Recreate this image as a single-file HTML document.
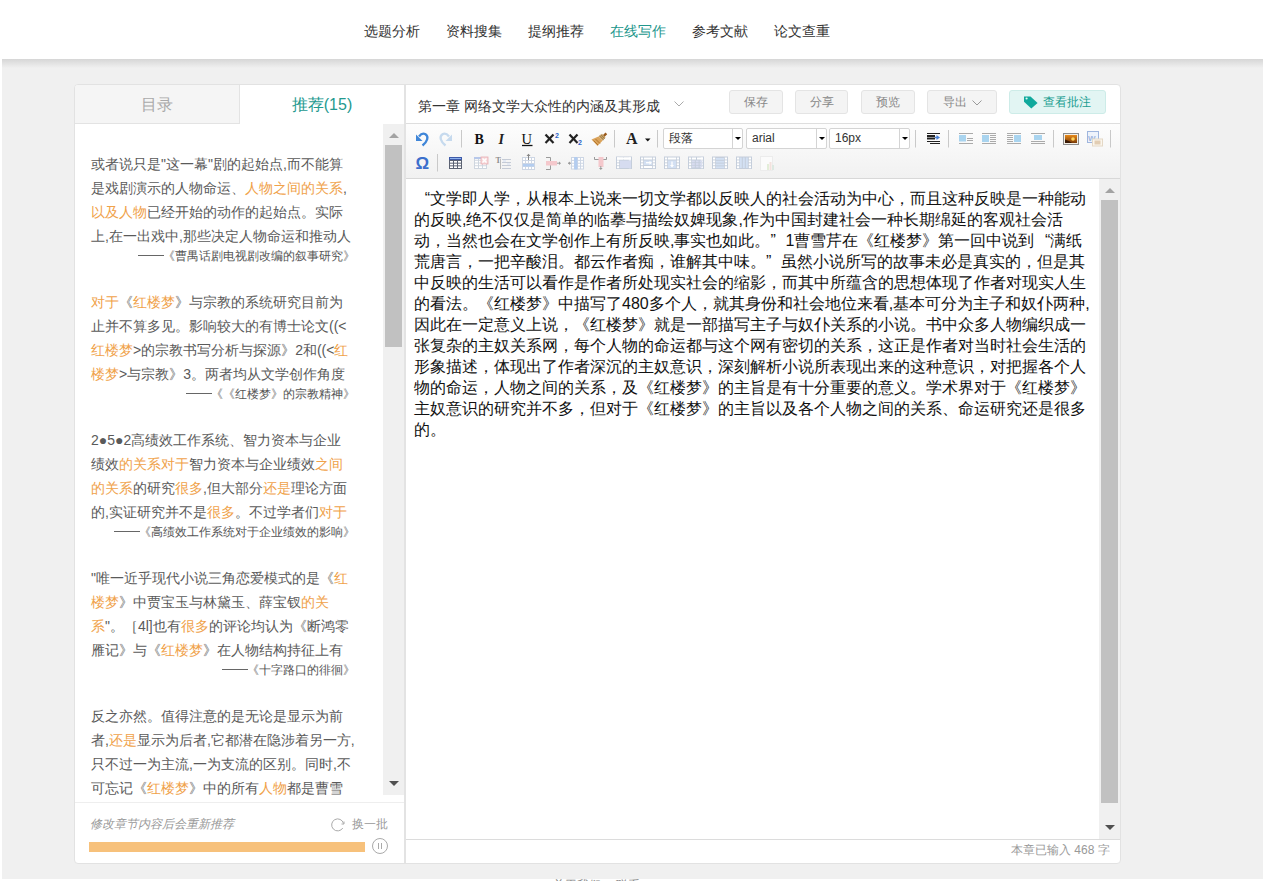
<!DOCTYPE html>
<html><head><meta charset="utf-8">
<style>
*{box-sizing:border-box;margin:0;padding:0}
html,body{width:1265px;height:881px;overflow:hidden;background:#fff;font-family:"Liberation Sans",sans-serif;}
.abs{position:absolute}
#hdr{position:absolute;left:0;top:0;width:1265px;height:59px;background:#fff}
#gbg{position:absolute;left:2px;top:59px;width:1261px;height:820px;background:#f0f0f0}
#shadow{position:absolute;left:2px;top:59px;width:1261px;height:9px;background:linear-gradient(#d6d6d6,#f0f0f0)}
.nav{position:absolute;top:21px;font-size:14px;line-height:20px;color:#333;white-space:nowrap}
.nav.on{color:#22968c}
#frame{position:absolute;left:74px;top:84px;width:1047px;height:780px;border:1px solid #e2e2e2;border-radius:4px;background:#fff}
#left{position:absolute;left:75px;top:85px;width:329px;height:777px;background:#fff}
#vline{position:absolute;left:404px;top:85px;width:2px;height:778px;background:#e3e3e3}
.tab{position:absolute;top:85px;height:39px;font-size:16px;line-height:39px;text-align:center}
#tab1{left:75px;width:165px;background:#f5f5f5;color:#aaa;border-right:1px solid #e3e3e3;border-bottom:1px solid #e3e3e3;border-top-left-radius:3px}
#tab2{left:240px;width:164px;color:#24998f}
.blk{position:absolute;left:91px;width:270px;font-size:14px;line-height:24px;color:#5a5a5a;white-space:nowrap}
.o{color:#f0a24a}
.cite{font-size:12px;line-height:18px;text-align:right;color:#555;margin-top:-1px;padding-right:6px}
#lsb{position:absolute;left:383px;top:124px;width:21px;height:671px;background:#f0f0f0}
#lthumb{position:absolute;left:385px;top:145px;width:17px;height:202px;background:#c1c1c1}
#lfoot{position:absolute;left:75px;top:802px;width:329px;height:1px;background:#eee}
.tri-up{position:absolute;width:0;height:0;border-left:5px solid transparent;border-right:5px solid transparent;border-bottom:5px solid #a3a3a3}
.tri-dn{position:absolute;width:0;height:0;border-left:5px solid transparent;border-right:5px solid transparent;border-top:5px solid #505050}
#hint{position:absolute;left:90px;top:816px;font-size:12px;line-height:16px;color:#999;font-style:italic;white-space:nowrap}
#swap{position:absolute;left:352px;top:816px;font-size:12px;line-height:16px;color:#999;white-space:nowrap}
#bar{position:absolute;left:89px;top:842px;width:276px;height:10px;background:#f7c17b}
#pause{position:absolute;left:372px;top:838px;width:16px;height:16px;border:1px solid #aaa;border-radius:50%}
/* right */
#title{position:absolute;left:418px;top:96px;font-size:14px;line-height:20px;color:#333;white-space:nowrap}
.btn{position:absolute;top:90px;height:24px;border:1px solid #e4e4e4;border-radius:3px;background:#f4f4f4;color:#888;font-size:12px;line-height:22px;text-align:center;white-space:nowrap}
#btn5{background:#e2f5f3;border-color:#cdece8;color:#1a9d91}
#tbar{position:absolute;left:406px;top:123px;width:714px;height:56px;background:linear-gradient(#fdfdfd,#f1f1f1);border-top:1px solid #dedede;border-bottom:1px solid #d8d8d8}
.sep{position:absolute;width:1px;height:17px;background:#d6d6d6}
.sel{position:absolute;top:128px;height:21px;border:1px solid #d4d4d4;border-radius:2px;background:#fff;font-size:12px;line-height:19px;color:#333;padding-left:5px;white-space:nowrap}
.sel i{position:absolute;right:0;top:0;width:10px;height:19px;border-left:1px solid #d4d4d4}
.sel i:after{content:"";position:absolute;left:2px;top:8px;border-left:3px solid transparent;border-right:3px solid transparent;border-top:3px solid #000}
#editor{position:absolute;left:414px;top:188px;font-size:16px;line-height:21px;color:#111;white-space:nowrap}
#rsb{position:absolute;left:1099px;top:179px;width:21px;height:660px;background:#f0f0f0}
#rthumb{position:absolute;left:1101px;top:200px;width:17px;height:603px;background:#c1c1c1}
#status{position:absolute;left:406px;top:839px;width:714px;height:1px;background:#dcdcdc}
#cnt{position:absolute;left:1011px;top:842px;font-size:12px;line-height:16px;color:#999;white-space:nowrap}
.dash{display:inline-block;width:26px;height:1px;background:#666;vertical-align:middle;margin-right:-1px;position:relative;top:-1px}
.q{display:inline-block;width:16px;text-align:right}
</style></head><body>
<div id="gbg"></div><div id="hdr"></div><div id="shadow"></div>
<div class="nav" style="left:364px">选题分析</div>
<div class="nav" style="left:446px">资料搜集</div>
<div class="nav" style="left:528px">提纲推荐</div>
<div class="nav on" style="left:610px">在线写作</div>
<div class="nav" style="left:692px">参考文献</div>
<div class="nav" style="left:774px">论文查重</div>

<div id="frame"></div>
<div id="vline"></div>
<div id="tab1" class="tab">目录</div>
<div id="tab2" class="tab">推荐(15)</div>

<div class="blk" style="top:152px">或者说只是"这一幕"剧的起始点,而不能算<br>是戏剧演示的人物命运、<span class="o">人物之间的关系</span>,<br><span class="o">以及人物</span>已经开始的动作的起始点。实际<br>上,在一出戏中,那些决定人物命运和推动人<div class="cite"><i class="dash"></i>《曹禺话剧电视剧改编的叙事研究》</div></div>
<div class="blk" style="top:290px"><span class="o">对于</span>《<span class="o">红楼梦</span>》与宗教的系统研究目前为<br>止并不算多见。影响较大的有博士论文((&lt;<br><span class="o">红楼梦</span>&gt;的宗教书写分析与探源》2和((&lt;<span class="o">红</span><br><span class="o">楼梦</span>&gt;与宗教》3。两者均从文学创作角度<div class="cite"><i class="dash"></i>《《红楼梦》的宗教精神》</div></div>
<div class="blk" style="top:428px">2●5●2高绩效工作系统、智力资本与企业<br>绩效<span class="o">的关系对于</span>智力资本与企业绩效<span class="o">之间</span><br><span class="o">的关系</span>的研究<span class="o">很多</span>,但大部分<span class="o">还是</span>理论方面<br>的,实证研究并不是<span class="o">很多</span>。不过学者们<span class="o">对于</span><div class="cite"><i class="dash"></i>《高绩效工作系统对于企业绩效的影响》</div></div>
<div class="blk" style="top:566px">"唯一近乎现代小说三角恋爱模式的是《<span class="o">红</span><br><span class="o">楼梦</span>》中贾宝玉与林黛玉、薛宝钗<span class="o">的关</span><br><span class="o">系</span>"。［4l]也有<span class="o">很多</span>的评论均认为《断鸿零<br>雁记》与《<span class="o">红楼梦</span>》在人物结构持征上有<div class="cite"><i class="dash"></i>《十字路口的徘徊》</div></div>
<div class="abs" style="left:75px;top:700px;width:308px;height:95px;overflow:hidden">
<div class="blk" style="left:16px;top:4px">反之亦然。值得注意的是无论是显示为前<br>者,<span class="o">还是</span>显示为后者,它都潜在隐涉着另一方,<br>只不过一为主流,一为支流的区别。同时,不<br>可忘记《<span class="o">红楼梦</span>》中的所有<span class="o">人物</span>都是曹雪</div>
</div>

<div id="lsb"></div><div id="lthumb"></div>
<div class="tri-up" style="left:389px;top:133px"></div>
<div class="tri-dn" style="left:389px;top:781px"></div>
<div id="lfoot"></div>
<div id="hint">修改章节内容后会重新推荐</div>
<svg class="abs" style="left:331px;top:817px" width="15" height="15" viewBox="0 0 15 15"><path d="M12.5 6.5 A6 6 0 1 0 11.8 11" fill="none" stroke="#aaa" stroke-width="1"/><path d="M10.5 7 L13 7 L13 4.5" fill="none" stroke="#aaa" stroke-width="1"/></svg>
<div id="swap">换一批</div>
<div id="bar"></div>
<div id="pause"><i style="position:absolute;left:5px;top:4px;width:1px;height:6px;background:#aaa"></i><i style="position:absolute;left:8px;top:4px;width:1px;height:6px;background:#aaa"></i></div>

<div id="title">第一章 网络文学大众性的内涵及其形成</div>
<svg class="abs" style="left:674px;top:101px" width="10" height="6" viewBox="0 0 10 6"><path d="M0.5 0.5 L5 5 L9.5 0.5" fill="none" stroke="#aaa" stroke-width="1"/></svg>
<div class="btn" style="left:729px;width:54px">保存</div>
<div class="btn" style="left:795px;width:53px">分享</div>
<div class="btn" style="left:861px;width:54px">预览</div>
<div class="btn" style="left:927px;width:70px;text-align:left;padding-left:15px">导出 <svg style="position:absolute;left:44px;top:9px" width="10" height="6" viewBox="0 0 10 6"><path d="M0.5 0.5 L5 5 L9.5 0.5" fill="none" stroke="#999" stroke-width="1"/></svg></div>
<div class="btn" id="btn5" style="left:1009px;width:97px;text-align:left;padding-left:33px">查看批注<svg style="position:absolute;left:12px;top:0px" width="20" height="20" viewBox="1022 91 20 20"><path d="M1024 96.5 L1030.5 96.5 L1037.6 103 L1031.3 108.6 L1024 101.8 Z" fill="#10a99c"/><circle cx="1026.6" cy="98.5" r="1.1" fill="#dff7f4"/></svg></div>

<div id="tbar"></div>
<div class="sep" style="left:461px;top:130px"></div>
<div class="sep" style="left:614px;top:130px"></div>
<div class="sep" style="left:657px;top:130px"></div>
<div class="sep" style="left:915px;top:130px"></div>
<div class="sep" style="left:948px;top:130px"></div>
<div class="sep" style="left:1053px;top:130px"></div>
<div class="sep" style="left:1110px;top:130px"></div>
<div class="sep" style="left:437px;top:154px"></div>
<!--TB--><svg style="position:absolute;left:0;top:0" width="1265" height="181" viewBox="0 0 1265 181"><line x1="461.5" y1="130" x2="461.5" y2="147.5" stroke="#c9c9c9" stroke-width="1"/><line x1="614.5" y1="130" x2="614.5" y2="147.5" stroke="#c9c9c9" stroke-width="1"/><line x1="657.5" y1="130" x2="657.5" y2="147.5" stroke="#c9c9c9" stroke-width="1"/><line x1="915.5" y1="130" x2="915.5" y2="147.5" stroke="#c9c9c9" stroke-width="1"/><line x1="948.5" y1="130" x2="948.5" y2="147.5" stroke="#c9c9c9" stroke-width="1"/><line x1="1053.5" y1="130" x2="1053.5" y2="147.5" stroke="#c9c9c9" stroke-width="1"/><line x1="1110.5" y1="130" x2="1110.5" y2="147.5" stroke="#c9c9c9" stroke-width="1"/><line x1="437.5" y1="154" x2="437.5" y2="171.5" stroke="#c9c9c9" stroke-width="1"/><path d="M422.5 145.5 C427.5 141.5 429 136.5 425.5 134.2 C423.5 133 421 133.8 419 136.5" fill="none" stroke="#3f86d8" stroke-width="2.3"/><polygon points="416,134.5 416,141 422.5,141" fill="#3f86d8"/><g transform="translate(868,0) scale(-1,1)"><path d="M422.5 145.5 C427.5 141.5 429 136.5 425.5 134.2 C423.5 133 421 133.8 419 136.5" fill="none" stroke="#c6daee" stroke-width="2.3"/><polygon points="416,134.5 416,141 422.5,141" fill="#c6daee"/></g><text x="474.5" y="144" font-family="Liberation Serif" font-weight="bold" font-size="14" fill="#111">B</text><text x="498.5" y="144" font-family="Liberation Serif" font-weight="bold" font-style="italic" font-size="14" fill="#222">I</text><text x="521.5" y="144" font-family="Liberation Serif" font-size="14.5" fill="#111">U</text><line x1="522" y1="145.5" x2="532.5" y2="145.5" stroke="#111" stroke-width="1.3"/><line x1="545.5" y1="134.5" x2="553.5" y2="143" stroke="#222" stroke-width="2.2"/><line x1="553.5" y1="134.5" x2="545.5" y2="143" stroke="#222" stroke-width="2.2"/><text x="555" y="137.5" font-family="Liberation Sans" font-weight="bold" font-size="7" fill="#2c63c8">2</text><line x1="569.5" y1="134.5" x2="577.5" y2="143" stroke="#222" stroke-width="2.2"/><line x1="577.5" y1="134.5" x2="569.5" y2="143" stroke="#222" stroke-width="2.2"/><text x="578" y="144.5" font-family="Liberation Sans" font-weight="bold" font-size="7" fill="#2c63c8">2</text><polygon points="602.5,135.5 605.5,132.5 607.2,134.2 604.2,137.2" fill="#9a5a1c"/><polygon points="598.5,136.5 602,133.8 605.5,137.5 602.5,140.8" fill="#c8a46a"/><line x1="599.5" y1="135.8" x2="603.8" y2="140" stroke="#8c6a3a" stroke-width="0.7"/><line x1="601" y1="134.8" x2="604.8" y2="138.8" stroke="#8c6a3a" stroke-width="0.7"/><polygon points="591.5,139.5 598.5,136.5 602.5,140.8 597.5,146" fill="#dba45c"/><line x1="593.5" y1="140.5" x2="598" y2="145" stroke="#a8691f" stroke-width="0.8"/><line x1="595.5" y1="139" x2="600" y2="143.5" stroke="#a8691f" stroke-width="0.8"/><text x="626" y="143.5" font-family="Liberation Serif" font-weight="bold" font-size="16" fill="#222">A</text><polygon points="645,138.5 650.5,138.5 647.75,141.5" fill="#111"/><line x1="927" y1="133.5" x2="940" y2="133.5" stroke="#222" stroke-width="1"/><line x1="927" y1="136" x2="935" y2="136" stroke="#222" stroke-width="2"/><line x1="927" y1="138.5" x2="935" y2="138.5" stroke="#222" stroke-width="2"/><line x1="927" y1="141.5" x2="940" y2="141.5" stroke="#222" stroke-width="1"/><line x1="930" y1="143.5" x2="940" y2="143.5" stroke="#222" stroke-width="1"/><polygon points="936.5,135 940,137.5 936.5,140" fill="#4c82d6"/><line x1="935" y1="137.5" x2="937" y2="137.5" stroke="#4c82d6" stroke-width="1.5"/><line x1="959" y1="133.5" x2="973" y2="133.5" stroke="#aaa" stroke-width="1"/><rect x="959" y="135" width="7" height="6.5" fill="#a9d4ef"/><line x1="967" y1="138.5" x2="973" y2="138.5" stroke="#aaa" stroke-width="1"/><line x1="967" y1="140.5" x2="973" y2="140.5" stroke="#aaa" stroke-width="1"/><line x1="959" y1="143.5" x2="973" y2="143.5" stroke="#aaa" stroke-width="1"/><line x1="982" y1="133.5" x2="996" y2="133.5" stroke="#aaa" stroke-width="1"/><rect x="982" y="135" width="7" height="7" fill="#a9d4ef"/><line x1="990" y1="135.5" x2="996" y2="135.5" stroke="#aaa" stroke-width="1"/><line x1="990" y1="137.5" x2="996" y2="137.5" stroke="#aaa" stroke-width="1"/><line x1="990" y1="139.5" x2="996" y2="139.5" stroke="#aaa" stroke-width="1"/><line x1="990" y1="141.5" x2="996" y2="141.5" stroke="#aaa" stroke-width="1"/><line x1="982" y1="143.5" x2="996" y2="143.5" stroke="#aaa" stroke-width="1"/><line x1="1007" y1="133.5" x2="1021" y2="133.5" stroke="#aaa" stroke-width="1"/><rect x="1014" y="135" width="7" height="7" fill="#a9d4ef"/><line x1="1007" y1="135.5" x2="1013" y2="135.5" stroke="#aaa" stroke-width="1"/><line x1="1007" y1="137.5" x2="1013" y2="137.5" stroke="#aaa" stroke-width="1"/><line x1="1007" y1="139.5" x2="1013" y2="139.5" stroke="#aaa" stroke-width="1"/><line x1="1007" y1="141.5" x2="1013" y2="141.5" stroke="#aaa" stroke-width="1"/><line x1="1007" y1="143.5" x2="1021" y2="143.5" stroke="#aaa" stroke-width="1"/><line x1="1031" y1="133.5" x2="1045" y2="133.5" stroke="#aaa" stroke-width="1"/><rect x="1034" y="135" width="8" height="5" fill="#a9d4ef"/><line x1="1031" y1="141.5" x2="1045" y2="141.5" stroke="#aaa" stroke-width="1"/><line x1="1031" y1="143.5" x2="1045" y2="143.5" stroke="#aaa" stroke-width="1"/><rect x="1063.5" y="133.5" width="15" height="11" fill="#f3efe6" stroke="#8c8c8c" stroke-width="1"/><defs><linearGradient id="sun" x1="0" y1="0" x2="0" y2="1"><stop offset="0" stop-color="#e88a1a"/><stop offset="1" stop-color="#7a3a08"/></linearGradient></defs><rect x="1065" y="135" width="12" height="8" fill="url(#sun)"/><circle cx="1073" cy="139" r="1.8" fill="#ffd25a"/><polygon points="1065,143 1065,139.5 1069,141 1072,143" fill="#3a1a05"/><rect x="1087.5" y="131.5" width="11" height="11" fill="#eef3fb" stroke="#9fb6de" stroke-width="1"/><text x="1088" y="140.5" font-family="Liberation Sans" font-weight="bold" font-size="8" fill="#9fb6de">W</text><rect x="1092.5" y="139" width="10" height="7" fill="#fbf6ee" stroke="#e4d8c6" stroke-width="1"/><rect x="1094.5" y="140.5" width="6" height="4" fill="#e2cdb3"/><text x="415.5" y="169" font-family="Liberation Sans" font-weight="bold" font-size="17" fill="#3c6fcc">Ω</text><rect x="449" y="157" width="13" height="12" fill="#5b6272"/><rect x="449" y="157" width="13" height="3" fill="#3e5aa8"/><rect x="450" y="158" width="11" height="1" fill="#8fb3ef"/><rect x="450" y="161.0" width="3" height="1.67" fill="#fff"/><rect x="450" y="163.67" width="3" height="1.67" fill="#fff"/><rect x="450" y="166.34" width="3" height="1.67" fill="#fff"/><rect x="454" y="161.0" width="3" height="1.67" fill="#fff"/><rect x="454" y="163.67" width="3" height="1.67" fill="#fff"/><rect x="454" y="166.34" width="3" height="1.67" fill="#fff"/><rect x="458" y="161.0" width="3" height="1.67" fill="#fff"/><rect x="458" y="163.67" width="3" height="1.67" fill="#fff"/><rect x="458" y="166.34" width="3" height="1.67" fill="#fff"/><rect x="474" y="157" width="13" height="12" fill="#cfd6df"/><rect x="475.0" y="158.0" width="3.0" height="1.75" fill="#fff"/><rect x="475.0" y="160.75" width="3.0" height="1.75" fill="#fff"/><rect x="475.0" y="163.5" width="3.0" height="1.75" fill="#fff"/><rect x="475.0" y="166.25" width="3.0" height="1.75" fill="#fff"/><rect x="479.0" y="158.0" width="3.0" height="1.75" fill="#fff"/><rect x="479.0" y="160.75" width="3.0" height="1.75" fill="#fff"/><rect x="479.0" y="163.5" width="3.0" height="1.75" fill="#fff"/><rect x="479.0" y="166.25" width="3.0" height="1.75" fill="#fff"/><rect x="483.0" y="158.0" width="3.0" height="1.75" fill="#fff"/><rect x="483.0" y="160.75" width="3.0" height="1.75" fill="#fff"/><rect x="483.0" y="163.5" width="3.0" height="1.75" fill="#fff"/><rect x="483.0" y="166.25" width="3.0" height="1.75" fill="#fff"/><rect x="474" y="157" width="8" height="2" fill="#b7c8ea"/><rect x="481" y="157" width="7" height="7" fill="#f7d9db" stroke="#e9aeb3" stroke-width="0.8"/><line x1="482.5" y1="158.5" x2="486.5" y2="162.5" stroke="#fff" stroke-width="1.5"/><line x1="486.5" y1="158.5" x2="482.5" y2="162.5" stroke="#fff" stroke-width="1.5"/><text x="495.5" y="162.5" font-family="Liberation Serif" font-weight="bold" font-size="8" fill="#8f8f8f">T</text><line x1="500.5" y1="159" x2="500.5" y2="169" stroke="#bbb" stroke-width="1"/><line x1="502" y1="159.5" x2="511" y2="159.5" stroke="#c5cbd6" stroke-width="1"/><line x1="502" y1="162.5" x2="511" y2="162.5" stroke="#c5cbd6" stroke-width="1"/><line x1="502" y1="165.5" x2="511" y2="165.5" stroke="#c5cbd6" stroke-width="1"/><line x1="502" y1="168.5" x2="511" y2="168.5" stroke="#c5cbd6" stroke-width="1"/><rect x="503" y="160" width="3" height="2" fill="#e4e9f3"/><rect x="507" y="163" width="3" height="2" fill="#e4e9f3"/><rect x="522" y="157" width="13" height="13" fill="#cdd6e4"/><rect x="523.0" y="158.0" width="2.0" height="2.0" fill="#fff"/><rect x="523.0" y="161.0" width="2.0" height="2.0" fill="#fff"/><rect x="523.0" y="164.0" width="2.0" height="2.0" fill="#fff"/><rect x="523.0" y="167.0" width="2.0" height="2.0" fill="#fff"/><rect x="526.0" y="158.0" width="2.0" height="2.0" fill="#fff"/><rect x="526.0" y="161.0" width="2.0" height="2.0" fill="#fff"/><rect x="526.0" y="164.0" width="2.0" height="2.0" fill="#fff"/><rect x="526.0" y="167.0" width="2.0" height="2.0" fill="#fff"/><rect x="529.0" y="158.0" width="2.0" height="2.0" fill="#fff"/><rect x="529.0" y="161.0" width="2.0" height="2.0" fill="#fff"/><rect x="529.0" y="164.0" width="2.0" height="2.0" fill="#fff"/><rect x="529.0" y="167.0" width="2.0" height="2.0" fill="#fff"/><rect x="532.0" y="158.0" width="2.0" height="2.0" fill="#fff"/><rect x="532.0" y="161.0" width="2.0" height="2.0" fill="#fff"/><rect x="532.0" y="164.0" width="2.0" height="2.0" fill="#fff"/><rect x="532.0" y="167.0" width="2.0" height="2.0" fill="#fff"/><rect x="523" y="164" width="11" height="2.5" fill="#b3cdf0"/><line x1="528.5" y1="154.5" x2="528.5" y2="160" stroke="#888" stroke-width="1"/><polygon points="526.5,156 528.5,153.8 530.5,156" fill="#888"/><path d="M546 157.5 H550.5 V169.5 H546" fill="none" stroke="#9a9a9a" stroke-width="1"/><rect x="546" y="161" width="11" height="4.5" fill="#f4c8cc"/><line x1="557" y1="163.2" x2="560" y2="163.2" stroke="#9a9a9a" stroke-width="1"/><polygon points="559,161.5 561,163.2 559,165" fill="#9a9a9a"/><rect x="571" y="157" width="13" height="12.5" fill="#cdd6e4"/><rect x="572.0" y="158.0" width="2.0" height="1.875" fill="#fff"/><rect x="572.0" y="160.875" width="2.0" height="1.875" fill="#fff"/><rect x="572.0" y="163.75" width="2.0" height="1.875" fill="#fff"/><rect x="572.0" y="166.625" width="2.0" height="1.875" fill="#fff"/><rect x="575.0" y="158.0" width="2.0" height="1.875" fill="#fff"/><rect x="575.0" y="160.875" width="2.0" height="1.875" fill="#fff"/><rect x="575.0" y="163.75" width="2.0" height="1.875" fill="#fff"/><rect x="575.0" y="166.625" width="2.0" height="1.875" fill="#fff"/><rect x="578.0" y="158.0" width="2.0" height="1.875" fill="#fff"/><rect x="578.0" y="160.875" width="2.0" height="1.875" fill="#fff"/><rect x="578.0" y="163.75" width="2.0" height="1.875" fill="#fff"/><rect x="578.0" y="166.625" width="2.0" height="1.875" fill="#fff"/><rect x="581.0" y="158.0" width="2.0" height="1.875" fill="#fff"/><rect x="581.0" y="160.875" width="2.0" height="1.875" fill="#fff"/><rect x="581.0" y="163.75" width="2.0" height="1.875" fill="#fff"/><rect x="581.0" y="166.625" width="2.0" height="1.875" fill="#fff"/><rect x="574.2" y="157" width="3.2" height="12.5" fill="#b3cdf0"/><line x1="568" y1="163.2" x2="571" y2="163.2" stroke="#9a9a9a" stroke-width="1"/><polygon points="570,161.5 568,163.2 570,165" fill="#9a9a9a"/><path d="M594.5 157 V159.5 H606.5 V157" fill="none" stroke="#9a9a9a" stroke-width="1" stroke-linejoin="miter" stroke-linecap="butt"/><rect x="598.5" y="157" width="5" height="10" fill="#f4c8cc"/><line x1="600.8" y1="166" x2="600.8" y2="169" stroke="#9a9a9a" stroke-width="1"/><polygon points="599,168 600.8,170 602.6,168" fill="#9a9a9a"/><rect x="616" y="156.5" width="16" height="12.5" fill="#c5cedb"/><rect x="617" y="157.5" width="2.2" height="2" fill="#fff"/><rect x="628.8" y="157.5" width="2.2" height="2" fill="#fff"/><rect x="617" y="160.4" width="2.2" height="2" fill="#fff"/><rect x="628.8" y="160.4" width="2.2" height="2" fill="#fff"/><rect x="617" y="163.3" width="2.2" height="2" fill="#fff"/><rect x="628.8" y="163.3" width="2.2" height="2" fill="#fff"/><rect x="617" y="166.2" width="2.2" height="2" fill="#fff"/><rect x="628.8" y="166.2" width="2.2" height="2" fill="#fff"/><rect x="617" y="157.5" width="14" height="2" fill="#fff"/><rect x="620" y="160.5" width="11" height="7.5" fill="#d6dcf0"/><rect x="617" y="157.5" width="6" height="2" fill="#fff"/><rect x="624" y="157.5" width="7" height="2" fill="#fff"/><rect x="640" y="156.5" width="16" height="12.5" fill="#c5cedb"/><rect x="641" y="157.5" width="2.2" height="2" fill="#fff"/><rect x="652.8" y="157.5" width="2.2" height="2" fill="#fff"/><rect x="641" y="160.4" width="2.2" height="2" fill="#fff"/><rect x="652.8" y="160.4" width="2.2" height="2" fill="#fff"/><rect x="641" y="163.3" width="2.2" height="2" fill="#fff"/><rect x="652.8" y="163.3" width="2.2" height="2" fill="#fff"/><rect x="641" y="166.2" width="2.2" height="2" fill="#fff"/><rect x="652.8" y="166.2" width="2.2" height="2" fill="#fff"/><rect x="644" y="157.5" width="8" height="2" fill="#fff"/><rect x="644" y="166.0" width="8" height="2" fill="#fff"/><rect x="644" y="160.5" width="8" height="4.5" fill="#d3e0f3"/><path d="M646 162.7 H651" stroke="#fff" stroke-width="1.3"/><polygon points="649.5,160.7 652,162.7 649.5,164.7" fill="#fff"/><rect x="664" y="156.5" width="16" height="12.5" fill="#c5cedb"/><rect x="665" y="157.5" width="2.2" height="2" fill="#fff"/><rect x="676.8" y="157.5" width="2.2" height="2" fill="#fff"/><rect x="665" y="160.4" width="2.2" height="2" fill="#fff"/><rect x="676.8" y="160.4" width="2.2" height="2" fill="#fff"/><rect x="665" y="163.3" width="2.2" height="2" fill="#fff"/><rect x="676.8" y="163.3" width="2.2" height="2" fill="#fff"/><rect x="665" y="166.2" width="2.2" height="2" fill="#fff"/><rect x="676.8" y="166.2" width="2.2" height="2" fill="#fff"/><rect x="668" y="157.5" width="8" height="2" fill="#fff"/><rect x="668" y="160.5" width="8" height="7.5" fill="#d3e0f3"/><path d="M672 161.5 V166.5" stroke="#fff" stroke-width="1.3"/><polygon points="670,165.0 672,167.5 674,165.0" fill="#fff"/><rect x="688" y="156.5" width="16" height="12.5" fill="#c5cedb"/><rect x="689" y="157.5" width="2.2" height="2" fill="#fff"/><rect x="700.8" y="157.5" width="2.2" height="2" fill="#fff"/><rect x="689" y="160.4" width="2.2" height="2" fill="#fff"/><rect x="700.8" y="160.4" width="2.2" height="2" fill="#fff"/><rect x="689" y="163.3" width="2.2" height="2" fill="#fff"/><rect x="700.8" y="163.3" width="2.2" height="2" fill="#fff"/><rect x="689" y="166.2" width="2.2" height="2" fill="#fff"/><rect x="700.8" y="166.2" width="2.2" height="2" fill="#fff"/><rect x="692.0" y="160.5" width="2.8" height="1.8" fill="#d8dcf0"/><rect x="692.0" y="163.1" width="2.8" height="1.8" fill="#d8dcf0"/><rect x="692.0" y="165.7" width="2.8" height="1.8" fill="#d8dcf0"/><rect x="695.8" y="160.5" width="2.8" height="1.8" fill="#d8dcf0"/><rect x="695.8" y="163.1" width="2.8" height="1.8" fill="#d8dcf0"/><rect x="695.8" y="165.7" width="2.8" height="1.8" fill="#d8dcf0"/><rect x="699.6" y="160.5" width="2.8" height="1.8" fill="#d8dcf0"/><rect x="699.6" y="163.1" width="2.8" height="1.8" fill="#d8dcf0"/><rect x="699.6" y="165.7" width="2.8" height="1.8" fill="#d8dcf0"/><rect x="692" y="157.5" width="4" height="2" fill="#fff"/><rect x="697" y="157.5" width="6" height="2" fill="#fff"/><rect x="712" y="156.5" width="16" height="12.5" fill="#c5cedb"/><rect x="713" y="157.5" width="2.2" height="2" fill="#fff"/><rect x="724.8" y="157.5" width="2.2" height="2" fill="#fff"/><rect x="713" y="160.4" width="2.2" height="2" fill="#fff"/><rect x="724.8" y="160.4" width="2.2" height="2" fill="#fff"/><rect x="713" y="163.3" width="2.2" height="2" fill="#fff"/><rect x="724.8" y="163.3" width="2.2" height="2" fill="#fff"/><rect x="713" y="166.2" width="2.2" height="2" fill="#fff"/><rect x="724.8" y="166.2" width="2.2" height="2" fill="#fff"/><rect x="716" y="158.0" width="8" height="1.8" fill="#d3e0f3"/><rect x="716" y="160.8" width="8" height="1.8" fill="#d3e0f3"/><rect x="716" y="163.6" width="8" height="1.8" fill="#d3e0f3"/><rect x="716" y="166.4" width="8" height="1.8" fill="#d3e0f3"/><rect x="736" y="156.5" width="16" height="12.5" fill="#c5cedb"/><rect x="737" y="157.5" width="2.2" height="2" fill="#fff"/><rect x="748.8" y="157.5" width="2.2" height="2" fill="#fff"/><rect x="737" y="160.4" width="2.2" height="2" fill="#fff"/><rect x="748.8" y="160.4" width="2.2" height="2" fill="#fff"/><rect x="737" y="163.3" width="2.2" height="2" fill="#fff"/><rect x="748.8" y="163.3" width="2.2" height="2" fill="#fff"/><rect x="737" y="166.2" width="2.2" height="2" fill="#fff"/><rect x="748.8" y="166.2" width="2.2" height="2" fill="#fff"/><rect x="739.8" y="157.5" width="2" height="10.5" fill="#d3e0f3"/><rect x="742.8" y="157.5" width="2" height="10.5" fill="#d3e0f3"/><rect x="745.8" y="157.5" width="2" height="10.5" fill="#d3e0f3"/><rect x="760.5" y="156.5" width="12" height="14" fill="#fbfbfb" stroke="#ececec" stroke-width="1"/><rect x="767" y="164" width="2" height="6" fill="#e3eed9"/><rect x="769.5" y="162" width="2" height="8" fill="#f3e2dd"/><rect x="772" y="165" width="2" height="5" fill="#dde9e2"/></svg><!--/TB-->
<div class="sel" style="left:663px;width:80px">段落<i></i></div>
<div class="sel" style="left:746px;width:81px">arial<i></i></div>
<div class="sel" style="left:829px;width:81px">16px<i></i></div>

<div id="editor"><span class="q">“</span>文学即人学，从根本上说来一切文学都以反映人的社会活动为中心，而且这种反映是一种能动<br>的反映,绝不仅仅是简单的临摹与描绘奴婢现象,作为中国封建社会一种长期绵延的客观社会活<br>动，当然也会在文学创作上有所反映,事实也如此。<span style="display:inline-block;width:10.5px">”</span> 1曹雪芹在《红楼梦》第一回中说到<span class="q">“</span>满纸<br>荒唐言，一把辛酸泪。都云作者痴，谁解其中味。<span style="display:inline-block;width:10.5px">”</span> 虽然小说所写的故事未必是真实的，但是其<br>中反映的生活可以看作是作者所处现实社会的缩影，而其中所蕴含的思想体现了作者对现实人生<br>的看法。《红楼梦》中描写了480多个人，就其身份和社会地位来看,基本可分为主子和奴仆两种,<br>因此在一定意义上说，《红楼梦》就是一部描写主子与奴仆关系的小说。书中众多人物编织成一<br>张复杂的主奴关系网，每个人物的命运都与这个网有密切的关系，这正是作者对当时社会生活的<br>形象描述，体现出了作者深沉的主奴意识，深刻解析小说所表现出来的这种意识，对把握各个人<br>物的命运，人物之间的关系，及《红楼梦》的主旨是有十分重要的意义。学术界对于《红楼梦》<br>主奴意识的研究并不多，但对于《红楼梦》的主旨以及各个人物之间的关系、命运研究还是很多<br>的。</div>

<div id="rsb"></div><div id="rthumb"></div>
<div class="tri-up" style="left:1105px;top:188px"></div>
<div class="tri-dn" style="left:1105px;top:825px"></div>
<div id="status"></div>
<div id="cnt">本章已输入 468 字</div>
<div class="abs" style="left:553px;top:877px;font-size:12px;line-height:16px;color:#888;white-space:nowrap">关于我们<span style="margin-left:15px">联系</span></div>
</body></html>
